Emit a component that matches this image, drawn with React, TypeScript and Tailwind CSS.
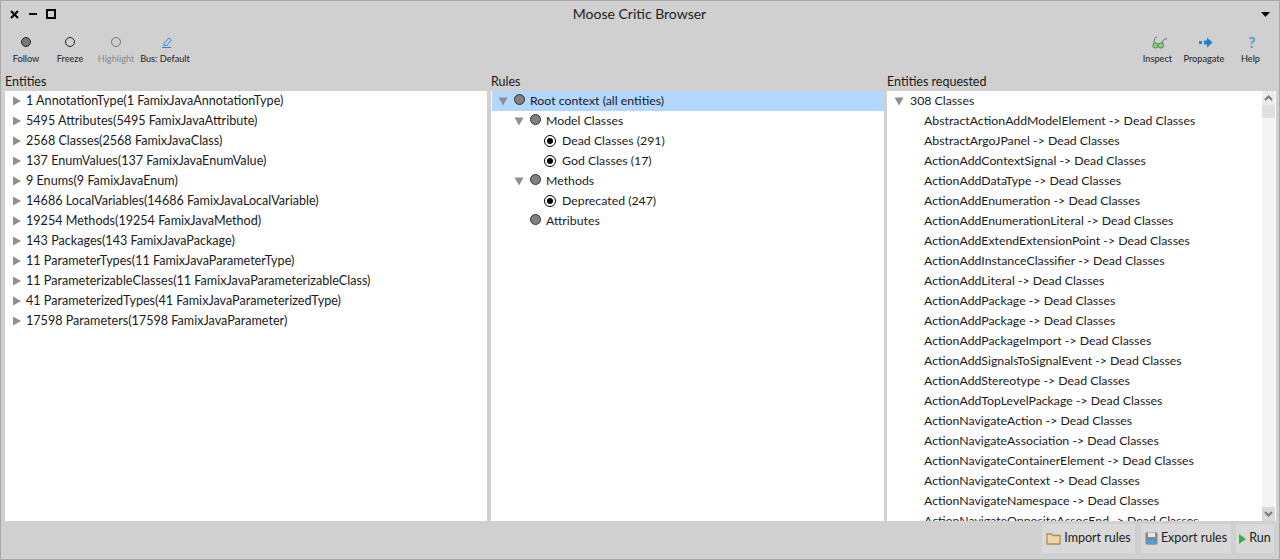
import React from 'react';

const font = { fontFamily: '"Lato", "Open Sans", sans-serif' };

const entities = [
    '1 AnnotationType(1 FamixJavaAnnotationType)',
    '5495 Attributes(5495 FamixJavaAttribute)',
    '2568 Classes(2568 FamixJavaClass)',
    '137 EnumValues(137 FamixJavaEnumValue)',
    '9 Enums(9 FamixJavaEnum)',
    '14686 LocalVariables(14686 FamixJavaLocalVariable)',
    '19254 Methods(19254 FamixJavaMethod)',
    '143 Packages(143 FamixJavaPackage)',
    '11 ParameterTypes(11 FamixJavaParameterType)',
    '11 ParameterizableClasses(11 FamixJavaParameterizableClass)',
    '41 ParameterizedTypes(41 FamixJavaParameterizedType)',
    '17598 Parameters(17598 FamixJavaParameter)',
];

const requested = [
    'AbstractActionAddModelElement',
    'AbstractArgoJPanel',
    'ActionAddContextSignal',
    'ActionAddDataType',
    'ActionAddEnumeration',
    'ActionAddEnumerationLiteral',
    'ActionAddExtendExtensionPoint',
    'ActionAddInstanceClassifier',
    'ActionAddLiteral',
    'ActionAddPackage',
    'ActionAddPackage',
    'ActionAddPackageImport',
    'ActionAddSignalsToSignalEvent',
    'ActionAddStereotype',
    'ActionAddTopLevelPackage',
    'ActionNavigateAction',
    'ActionNavigateAssociation',
    'ActionNavigateContainerElement',
    'ActionNavigateContext',
    'ActionNavigateNamespace',
    'ActionNavigateOppositeAssocEnd',
];

const Tri = ({ open }: { open?: boolean }) => (
    <svg width="10" height="10" viewBox="0 0 10 10" className="shrink-0">
        {open ? <path d="M0.5 1.5 H9.5 L5 9.5 Z" fill="#8f8f8f" /> : <path d="M1 0.5 V9.5 L9 5 Z" fill="#8f8f8f" />}
    </svg>
);

const Dot = () => <span className="w-[11px] h-[11px] mb-[3px] rounded-full bg-[#808080] border border-[#333] shrink-0" />;

const Radio = () => (
    <span className="w-[12px] h-[12px] mr-px rounded-full bg-white border border-black shrink-0 flex items-center justify-center">
        <span className="w-[6px] h-[6px] rounded-full bg-black" />
    </span>
);

const ToolButton = ({ label, icon, muted, width, iconShift }: { label: string; icon: React.ReactNode; muted?: boolean; width: string; iconShift?: string }) => (
    <div className={`flex flex-col items-center ${width}`}>
        <div className={`h-[16px] flex items-center justify-center ${iconShift ?? ''}`}>{icon}</div>
        <span className={`text-[9.2px] leading-[14px] mt-[2px] whitespace-nowrap ${muted ? 'text-[#8a8a8a]' : 'text-[#222]'}`}>{label}</span>
    </div>
);

const Rule = ({ indent, tri, radio, label, selected }: { indent: string; tri?: boolean; radio?: boolean; label: string; selected?: boolean }) => (
    <div className={`h-[20px] flex items-center ${indent} ${selected ? 'bg-[#b3d7ff]' : ''}`}>
        <span className="w-[10px] mr-[6px] flex shrink-0">{tri && <Tri open />}</span>
        {radio ? <Radio /> : <Dot />}
        <span className="ml-[5px] whitespace-nowrap">{label}</span>
    </div>
);

const BottomButton = ({ icon, label, width }: { icon: React.ReactNode; label: string; width: string }) => (
    <div className={`h-[29px] ${width} bg-[#d9d9d9] flex items-center justify-center gap-[3px] text-[12.5px] text-[#222]`}>
        {icon}
        <span className="whitespace-nowrap">{label}</span>
    </div>
);

export default function App() {
    return (
        <div style={font} className="w-[1280px] h-[560px] overflow-hidden bg-[#d0d0d0] border border-[#a8a8a8] flex flex-col text-[12.5px] text-[#1a1a1a]">
            <div className="h-[26px] shrink-0 flex items-center pl-[9px] pr-[9px]">
                <div className="flex items-center gap-[9px] w-[60px]">
                    <svg width="9" height="9" viewBox="0 0 9 9"><path d="M1 1 L8 8 M8 1 L1 8" stroke="#000" strokeWidth="2" /></svg>
                    <span className="w-[8px] h-[2px] bg-black ml-[1px]" />
                    <span className="w-[10px] h-[10px] border-2 border-black" />
                </div>
                <div className="flex-1 text-center text-[14px] leading-[18px] text-[#222] pr-[52px]">Moose Critic Browser</div>
                <svg width="9" height="5" viewBox="0 0 9 5"><path d="M0 0 H9 L4.5 5 Z" fill="#000" /></svg>
            </div>

            <div className="h-[45px] shrink-0 flex items-start justify-between pt-[7px] pl-[5px] pr-[11px]">
                <div className="flex">
                    <ToolButton width="w-[40px]" label="Follow" icon={<span className="w-[10px] h-[10px] rounded-full bg-[#777] border border-[#222]" />} />
                    <ToolButton width="w-[48px]" label="Freeze" icon={<span className="w-[10px] h-[10px] rounded-full bg-[#d0d0d0] border border-[#222]" />} />
                    <ToolButton width="w-[44px]" muted label="Highlight" icon={<span className="w-[10px] h-[10px] rounded-full bg-[#d0d0d0] border border-[#777]" />} />
                    <ToolButton
                        width="w-[54px]"
                        label="Bus: Default"
                        iconShift="ml-[3px]"
                        icon={
                            <svg width="12" height="12" viewBox="0 0 12 12" fill="none" stroke="#2a84d6" strokeWidth="1">
                                <path d="M3 7.5 L8 2 L10.5 4 L5.5 9.5 L3 9.5 Z" />
                                <path d="M1 11.5 H10" />
                            </svg>
                        }
                    />
                </div>
                <div className="flex">
                    <ToolButton
                        width="w-[35px]"
                        label="Inspect"
                        iconShift="ml-[4px]"
                        icon={
                            <svg width="16" height="13" viewBox="0 0 16 13" fill="none">
                                <circle cx="3.5" cy="9.5" r="2.6" fill="#8fd08a" stroke="#3f8f3f" />
                                <circle cx="9" cy="9.5" r="2.6" fill="#8fd08a" stroke="#3f8f3f" />
                                <path d="M2 7 Q2 1 5 1 M10.5 7 Q11 2 15 3" stroke="#555" strokeWidth="0.8" />
                            </svg>
                        }
                    />
                    <ToolButton
                        width="w-[58px]"
                        label="Propagate"
                        iconShift="ml-[4px]"
                        icon={
                            <svg width="14" height="11" viewBox="0 0 14 11">
                                <rect x="0" y="4" width="3" height="3" fill="#1b80d8" />
                                <path d="M5 3.5 H8 V0.5 L13.5 5.5 L8 10.5 V7.5 H5 Z" fill="#1b80d8" />
                            </svg>
                        }
                    />
                    <ToolButton width="w-[35px]" label="Help" iconShift="ml-[3px]" icon={<span className="text-[15px] font-bold leading-none text-[#4f9fc0]">?</span>} />
                </div>
            </div>

            <div className="flex-1 min-h-0 flex pl-[4px] pr-[3px]">
                <div className="w-[482px] flex flex-col mr-[4px]">
                    <div className="h-[19px] shrink-0 flex items-center pt-[2px]">Entities</div>
                    <div className="flex-1 bg-white overflow-hidden">
                        {entities.map(e => (
                            <div key={e} className="h-[20px] flex items-center pl-[7px] gap-[4px] whitespace-nowrap text-[12.6px]">
                                <Tri />
                                {e}
                            </div>
                        ))}
                    </div>
                </div>

                <div className="w-[393px] flex flex-col mr-[3px]">
                    <div className="h-[19px] shrink-0 flex items-center pt-[2px]">Rules</div>
                    <div className="flex-1 bg-white overflow-hidden">
                        <div className="ml-px text-[12.3px]">
                            <Rule indent="pl-[6px]" tri label="Root context (all entities)" selected />
                            <Rule indent="pl-[22px]" tri label="Model Classes" />
                            <Rule indent="pl-[36px]" radio label="Dead Classes (291)" />
                            <Rule indent="pl-[36px]" radio label="God Classes (17)" />
                            <Rule indent="pl-[22px]" tri label="Methods" />
                            <Rule indent="pl-[36px]" radio label="Deprecated (247)" />
                            <Rule indent="pl-[22px]" label="Attributes" />
                        </div>
                    </div>
                </div>

                <div className="flex-1 flex flex-col min-w-0">
                    <div className="h-[19px] shrink-0 flex items-center pt-[2px]">Entities requested</div>
                    <div className="flex-1 min-h-0 bg-white flex overflow-hidden">
                        <div className="flex-1 min-w-0 overflow-hidden text-[12.3px]">
                            <div className="h-[20px] flex items-center pl-[7px] gap-[6px] whitespace-nowrap">
                                <Tri open />
                                308 Classes
                            </div>
                            {requested.map((r, i) => (
                                <div key={i} className="h-[20px] flex items-center pl-[37px] whitespace-nowrap">
                                    {r} -&gt; Dead Classes
                                </div>
                            ))}
                        </div>
                        <div className="w-[13px] mr-px shrink-0 bg-[#f4f4f4] flex flex-col">
                            <div className="h-[14px] bg-[#ececec] flex items-center justify-center">
                                <svg width="9" height="6" viewBox="0 0 9 6" fill="none"><path d="M1 5 L4.5 1.5 L8 5" stroke="#7a7a7a" strokeWidth="2" /></svg>
                            </div>
                            <div className="h-[13px] bg-[#e0e0e0]" />
                            <div className="flex-1" />
                            <div className="h-[14px] bg-[#d8d8d8] flex items-center justify-center">
                                <svg width="9" height="6" viewBox="0 0 9 6" fill="none"><path d="M1 1 L4.5 4.5 L8 1" stroke="#7a7a7a" strokeWidth="2" /></svg>
                            </div>
                        </div>
                    </div>
                </div>
            </div>

            <div className="h-[38px] shrink-0 flex items-start justify-end pt-[3px] pr-[5px]">
                <BottomButton
                    width="w-[93px]"
                    label="Import rules"
                    icon={
                        <svg width="15" height="13" viewBox="0 0 15 13" fill="#e9d7b4" stroke="#b98a4a" strokeWidth="1.3">
                            <path d="M1 2 H6 L7 3.5 H14 V12 H1 Z" />
                        </svg>
                    }
                />
                <div className="w-[6px]" />
                <BottomButton
                    width="w-[90px]"
                    label="Export rules"
                    icon={
                        <svg width="13" height="13" viewBox="0 0 13 13">
                            <rect x="0.5" y="0.5" width="12" height="12" fill="#7f8a96" />
                            <rect x="3" y="1" width="7" height="4" fill="#e8e8e8" />
                            <rect x="3" y="8" width="7" height="4.5" fill="#4a9fd8" />
                        </svg>
                    }
                />
                <div className="w-[5px]" />
                <BottomButton
                    width="w-[38px]"
                    label="Run"
                    icon={<svg width="7" height="10" viewBox="0 0 7 10"><path d="M0 0 L7 5 L0 10 Z" fill="#3fae4a" /></svg>}
                />
            </div>
        </div>
    );
}
